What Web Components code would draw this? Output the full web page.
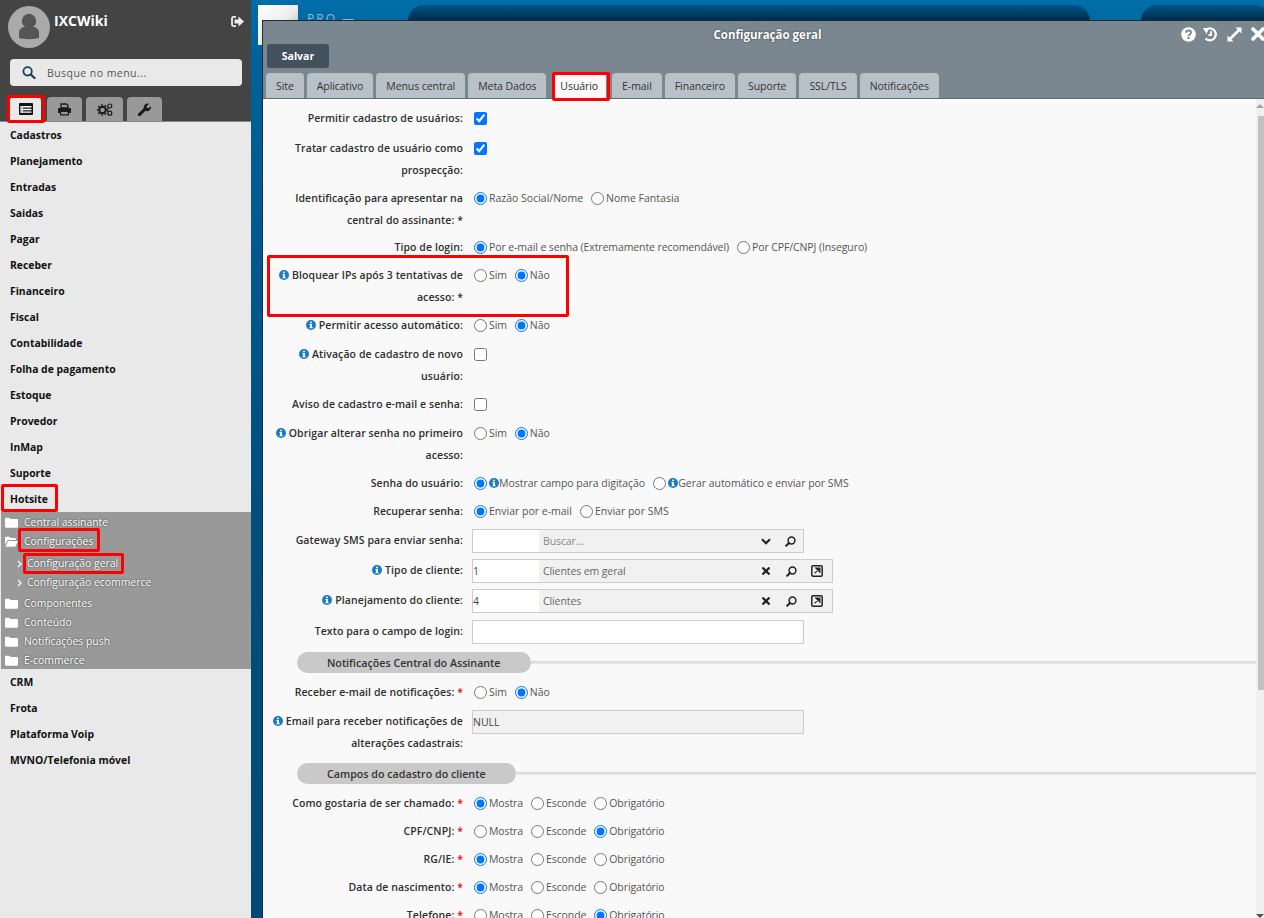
<!DOCTYPE html>
<html lang="pt-BR">
<head>
<meta charset="utf-8">
<title>IXCWiki</title>
<style>
  html, body { margin: 0; height: 100%; overflow: hidden; }
  body { font-family: "Open Sans", "Noto Sans", sans-serif; font-size: 10.5px; color: #333; }
</style>
</head>
<body>
<ixc-app>
  <ixc-sidebar slot="side"></ixc-sidebar>
  <ixc-desktop slot="main">
    <ixc-window title-text="Configuração geral">
      <form-row h="30" label="Permitir cadastro de usuários:"><input type="checkbox" checked></form-row>
      <form-row h="50" label="Tratar cadastro de usuário como prospecção:"><input type="checkbox" checked></form-row>
      <form-row h="49" label="Identificação para apresentar na central do assinante:" req="plain">
        <radio-group style="letter-spacing:0" name="a" options="Razão Social/Nome|Nome Fantasia" checked="0"></radio-group>
      </form-row>
      <form-row h="28" label="Tipo de login:">
        <radio-group name="b" options="Por e-mail e senha (Extremamente recomendável)|Por CPF/CNPJ (Inseguro)" checked="0"></radio-group>
      </form-row>
      <form-row h="50" info label="Bloquear IPs após 3 tentativas de acesso:" req="plain">
        <radio-group name="c" options="Sim|Não" checked="1"></radio-group>
      </form-row>
      <form-row h="29" info label="Permitir acesso automático:">
        <radio-group name="d" options="Sim|Não" checked="1"></radio-group>
      </form-row>
      <form-row h="50" info label="Ativação de cadastro de novo usuário:"><input type="checkbox"></form-row>
      <form-row h="29" label="Aviso de cadastro e-mail e senha:"><input type="checkbox"></form-row>
      <form-row h="50" info label="Obrigar alterar senha no primeiro acesso:">
        <radio-group name="e" options="Sim|Não" checked="1"></radio-group>
      </form-row>
      <form-row h="28" label="Senha do usuário:">
        <radio-group style="letter-spacing:-.03px" name="f" info options="Mostrar campo para digitação|Gerar automático e enviar por SMS" checked="0"></radio-group>
      </form-row>
      <form-row h="29" label="Recuperar senha:">
        <radio-group style="letter-spacing:0" name="g" options="Enviar por e-mail|Enviar por SMS" checked="0"></radio-group>
      </form-row>
      <form-row h="30" label="Gateway SMS para enviar senha:"><lookup-field placeholder="Buscar..." actions="down,search"></lookup-field></form-row>
      <form-row h="30" info label="Tipo de cliente:"><lookup-field code="1" text="Clientes em geral" actions="clear,search,open"></lookup-field></form-row>
      <form-row h="31" info label="Planejamento do cliente:"><lookup-field code="4" text="Clientes" actions="clear,search,open"></lookup-field></form-row>
      <form-row h="32" label="Texto para o campo de login:"><text-box></text-box></form-row>
      <section-title>Notificações Central do Assinante</section-title>
      <form-row h="29" label="Receber e-mail de notificações:" req="red">
        <radio-group name="h" options="Sim|Não" checked="1"></radio-group>
      </form-row>
      <form-row h="53" info label="Email para receber notificações de alterações cadastrais:"><text-box readonly value="NULL"></text-box></form-row>
      <section-title>Campos do cadastro do cliente</section-title>
      <form-row h="28" label="Como gostaria de ser chamado:" req="red"><radio-group name="i" options="Mostra|Esconde|Obrigatório" checked="0"></radio-group></form-row>
      <form-row h="28" label="CPF/CNPJ:" req="red"><radio-group name="j" options="Mostra|Esconde|Obrigatório" checked="2"></radio-group></form-row>
      <form-row h="28" label="RG/IE:" req="red"><radio-group name="k" options="Mostra|Esconde|Obrigatório" checked="0"></radio-group></form-row>
      <form-row h="28" label="Data de nascimento:" req="red"><radio-group name="l" options="Mostra|Esconde|Obrigatório" checked="0"></radio-group></form-row>
      <form-row h="28" label="Telefone:" req="red"><radio-group name="m" options="Mostra|Esconde|Obrigatório" checked="2"></radio-group></form-row>
    </ixc-window>
  </ixc-desktop>
</ixc-app>

<!-- marcações vermelhas por cima da tela -->
<red-box x="7" y="95" w="38" h="28"></red-box>
<red-box x="1" y="484" w="57" h="28"></red-box>
<red-box x="18" y="528" w="82" h="24"></red-box>
<red-box x="23" y="553" w="101" h="21"></red-box>
<red-box x="552" y="72" w="58" h="29"></red-box>
<red-box x="267" y="255" w="302" h="62"></red-box>

<script>
const icons = {
  find: '<svg width="14" height="13" viewBox="0 0 14 13"><circle cx="5.600" cy="5.300" r="4.200" fill="none" stroke="currentColor" stroke-width="1.800"/><path d="M8.800 8.500 12.500 12" stroke="currentColor" stroke-width="2.300" stroke-linecap="round"/></svg>',
  search: '<svg width="11" height="11" viewBox="0 0 11 11"><circle cx="6.500" cy="4.500" r="3.400" fill="none" stroke="currentColor" stroke-width="1.500"/><path d="M4 7 1.200 9.800" stroke="currentColor" stroke-width="2" stroke-linecap="round"/></svg>',
  clear: '<svg width="8" height="8" viewBox="0 0 8 8"><path d="M1.200 1.200 6.800 6.800M6.800 1.200 1.200 6.800" stroke="currentColor" stroke-width="2.300" stroke-linecap="round"/></svg>',
  down: '<svg width="10" height="7" viewBox="0 0 10 7"><path d="M1 1.300 5 5.200 9 1.300" fill="none" stroke="currentColor" stroke-width="2.200"/></svg>',
  open: '<svg width="12" height="12" viewBox="0 0 12 12"><rect x=".8" y=".8" width="10.400" height="10.400" rx="1.200" fill="none" stroke="currentColor" stroke-width="1.500"/><path d="M3.600 8.400 7.600 4.400M5 3.200H8.800V7Z" fill="currentColor" stroke="currentColor" stroke-width="1.300"/></svg>',
  info: '<svg width="10" height="10" viewBox="0 0 10 10"><circle cx="5" cy="5" r="5" fill="#1b7cc4"/><rect x="4.100" y="1.700" width="1.800" height="1.500" fill="#fff"/><path d="M3.400 4.100H5.900V7.300H6.700V8.300H3.400V7.300H4.100V5.100H3.400Z" fill="#fff"/></svg>'
}

/**
 * Frame of the page: sidebar on the left, desktop on the right.
 */
customElements.define('ixc-app', class extends HTMLElement {
  constructor () {
    super()
    this.attachShadow({ mode: 'open' }).innerHTML = `
      <style>
        :host { display: flex; width: 1264px; height: 918px; overflow: hidden; }
        ::slotted([slot=side]) { flex: 0 0 251px; }
        ::slotted([slot=main]) { flex: 1; }
      </style>
      <slot name="side"></slot><slot name="main"></slot>`
  }
})

const sideTemplate = document.createElement('template')
sideTemplate.innerHTML = `
  <style>
    :host { display: flex; flex-direction: column; height: 918px; background: #e9e9e9; color: #111; }
    .top { background: #444; height: 121px; box-sizing: border-box; display: flex; flex-direction: column; }
    .user { display: flex; height: 59px; padding: 6px 0 0 8px; box-sizing: border-box; }
    .avatar { width: 42px; height: 42px; border-radius: 50%; background: #aaa; flex: none; }
    .name { color: #fff; font-weight: 700; font-size: 14px; margin: 5px 0 0 4px; line-height: 19px; }
    .out { margin: 10px 0 0 auto; padding-right: 7px; height: 11px; color: #eee; }
    .search { margin: 0 9px 0 10px; height: 27px; border-radius: 4px; background: #e9e9e9; display: flex; align-items: center; gap: 11px; padding-left: 12px; color: #555; letter-spacing: .45px; }
    .search svg { color: #1d3f58; flex: none; }
    .tabs { display: flex; margin-top: auto; padding-left: 10px; gap: 5px; align-items: flex-end; }
    .tab { height: 24px; background: #999; border-radius: 4px 4px 0 0; display: flex; align-items: center; justify-content: center; color: #1a1a1a; box-sizing: border-box; }
    .tab.on { background: #e9e9e9; height: 24px; width: 31px; margin-right: 1px; }
    .menu { display: flex; flex-direction: column; border-top: 1px solid #888; font-size: 10.4px; }
    .item { height: 26px; line-height: 26px; padding-left: 10px; font-weight: 700; }
    .tree { background: #999; height: 157px; margin-left: 1px; padding-top: 1px; color: #fff; text-shadow: 0 0 2px #333; box-sizing: border-box; }
    .node { height: 19px; line-height: 19px; display: flex; align-items: center; padding-left: 4px; gap: 6px; }
    .leaf { height: 19px; line-height: 19px; display: flex; align-items: center; padding-left: 16px; gap: 5px; }
    .leaf.first { margin-top: 3px; }
    .leaf.last { margin-bottom: 2px; }
    .node svg, .leaf svg { flex: none; }
  </style>
  <div class="top">
    <div class="user">
      <div class="avatar">
        <svg width="42" height="42" viewBox="0 0 42 42"><circle cx="21" cy="15" r="7.200" fill="#555"/><path d="M11 32v-5c0-3.500 2.500-6 6-6h8c3.500 0 6 2.500 6 6v5c-5 1.500-15 1.500-20 0Z" fill="#555"/></svg>
      </div>
      <div class="name">IXCWiki</div>
      <div class="out">
        <svg width="13" height="11" viewBox="0 0 13 11"><path d="M5 .9H2.500C1.500.9 1 1.500 1 2.400v6.200c0 .9.500 1.500 1.500 1.500H5" fill="none" stroke="currentColor" stroke-width="1.800"/><path d="M7.500.5 13 5.500 7.500 10.500V7.500H3.500V3.500H7.500Z" fill="currentColor"/></svg>
      </div>
    </div>
    <div class="search">${icons.find}<span>Busque no menu...</span></div>
    <div class="tabs">
      <div class="tab on">
        <svg width="14" height="12" viewBox="0 0 14 12"><rect width="14" height="12" rx="1" fill="#111"/><path d="M1.500 3h11v1.500h-11zM1.500 5.800h11v1.400h-11zM1.500 8.400h11v1.400h-11z" fill="#fff"/><path d="M1.500 3h2.500v6.800H1.500z" fill="#d8c8f0"/></svg>
      </div>
      <div class="tab" style="width:35px;margin-right:-1px">
        <svg width="13" height="13" viewBox="0 0 13 13"><path d="M3 5V1h5.500L10 2.500V5Z" fill="none" stroke="currentColor" stroke-width="1.300"/><path d="M0 6.200C0 5.500.5 5 1.200 5h10.600c.7 0 1.200.5 1.200 1.200V10h-2v2.500H2V10H0ZM3.200 9v2.300h6.600V9Z" fill="currentColor"/></svg>
      </div>
      <div class="tab" style="width:37px;margin-right:-1px">
        <svg width="16" height="13" viewBox="0 0 16 13"><circle cx="5.500" cy="7" r="3.200" fill="none" stroke="currentColor" stroke-width="2"/><circle cx="5.500" cy="7" r="5" fill="none" stroke="currentColor" stroke-width="1.400" stroke-dasharray="1.800 1.800"/><circle cx="12.800" cy="3" r="2" fill="none" stroke="currentColor" stroke-width="1.200"/><circle cx="12.800" cy="10.200" r="2" fill="none" stroke="currentColor" stroke-width="1.200"/></svg>
      </div>
      <div class="tab" style="width:35px">
        <svg width="13" height="13" viewBox="0 0 13 13"><path d="M1.400 11.600 6.800 6.200" stroke="currentColor" stroke-width="3" stroke-linecap="round"/><path d="M5.600 4.600C5.600 2.400 7.400.6 9.600.6c.5 0 1 .1 1.400.3L8.600 3.200l.4 1.600 1.600.4L12.700 3c.2.400.3.800.3 1.200 0 2.200-1.800 4-4 4-.7 0-1.400-.2-2-.6Z" fill="currentColor"/></svg>
      </div>
    </div>
  </div>
  <div class="menu" id="menu"></div>`

/**
 * The left menu with the open Hotsite tree.
 */
customElements.define('ixc-sidebar', class extends HTMLElement {
  constructor () {
    super()
    this.attachShadow({ mode: 'open' }).appendChild(sideTemplate.content.cloneNode(true))
    const folder = '<svg width="13" height="11" viewBox="0 0 13 11"><path d="M0 2C0 1.200.5.700 1.200.7h3L5.500 2h6.300c.7 0 1.200.5 1.200 1.200v6.300c0 .7-.5 1.200-1.200 1.200H1.200C.5 10.700 0 10.200 0 9.500Z" fill="#fff"/></svg>'
    const openFolder = '<svg width="13" height="11" viewBox="0 0 13 11"><path d="M0 9V2C0 1.200.5.700 1.200.7h3L5.500 2h4.300c.7 0 1.200.5 1.200 1.200V4H3.500C2.800 4 2.400 4.300 2.100 4.800Z" fill="#fff"/><path d="M3 5h10L10.200 10.700H.6Z" fill="#fff"/></svg>'
    const chevron = '<svg width="5" height="8" viewBox="0 0 5 8"><path d="M1 1 4 4 1 7" fill="none" stroke="#fff" stroke-width="1.200"/></svg>'
    const before = ['Cadastros', 'Planejamento', 'Entradas', 'Saidas', 'Pagar', 'Receber', 'Financeiro', 'Fiscal', 'Contabilidade', 'Folha de pagamento', 'Estoque', 'Provedor', 'InMap', 'Suporte', 'Hotsite']
    const after = ['CRM', 'Frota', 'Plataforma Voip', 'MVNO/Telefonia móvel']
    const item = (text) => `<div class="item">${text}</div>`
    const node = (text, icon = folder) => `<div class="node">${icon}<span>${text}</span></div>`
    this.shadowRoot.querySelector('#menu').innerHTML = before.map(item).join('') + `
      <div class="tree">
        ${node('Central assinante')}
        ${node('Configurações', openFolder)}
        <div class="leaf first">${chevron}<span>Configuração geral</span></div>
        <div class="leaf last">${chevron}<span>Configuração ecommerce</span></div>
        ${node('Componentes')}
        ${node('Conteúdo')}
        ${node('Notificações push')}
        ${node('E-commerce')}
      </div>` + after.map(item).join('')
  }
})

/**
 * Blue backdrop behind the window, the top of the page shows through it.
 */
customElements.define('ixc-desktop', class extends HTMLElement {
  constructor () {
    super()
    this.attachShadow({ mode: 'open' }).innerHTML = `
      <style>
        :host { display: block; position: relative; height: 918px; overflow: hidden; background: linear-gradient(#006ea8, #00619a 60px, #004f7f 500px, #004a78); }
        .logo { position: absolute; left: 7px; top: 5px; width: 40px; height: 40px; background: linear-gradient(135deg, #fff, #eee 50%, #aaa); }
        .pro { position: absolute; left: 56px; top: 11px; color: #8db8d6; font-size: 12px; letter-spacing: 2px; line-height: 16px; }
        .bar { position: absolute; top: 5px; height: 40px; border-radius: 16px 16px 0 0; background: linear-gradient(#00558a, #002a48 16px); }
        ::slotted(ixc-window) { position: absolute; left: 11px; top: 20px; width: 1003px; height: 898px; }
      </style>
      <div class="logo"></div><div class="pro">PRO —</div>
      <div class="bar" style="left:157px;width:682px"></div>
      <div class="bar" style="left:890px;width:130px"></div>
      <slot></slot>`
  }
})

const windowTemplate = document.createElement('template')
windowTemplate.innerHTML = `
  <style>
    :host { display: flex; flex-direction: column; box-sizing: border-box; border: 1px solid #1d2a33; border-width: 1px 0 0 1px; background: #f9f9f9; }
    .head { background: #7a8690; height: 78px; flex: none; display: flex; flex-direction: column; position: relative; }
    .title { text-align: center; color: #fff; font-weight: 700; font-size: 11.500px; line-height: 28px; height: 23px; padding-left: 7px; text-shadow: 0 0 2px #333; }
    .tools { position: absolute; right: 0; top: 5px; display: flex; align-items: center; height: 16px; color: #fff; }
    .tools svg { display: block; }
    .save { margin: 0 0 0 4px; width: 62px; height: 24px; border: 0; border-radius: 3px; background: #43515d; color: #fff; font: 700 10.500px "Open Sans", sans-serif; }
    .tabs { display: flex; gap: 3px; margin-top: 5px; padding-left: 3px; height: 25px; border-bottom: 1px solid #5f6c77; letter-spacing: -.07px; }
    .tab { height: 25px; line-height: 26px; padding: 0 10px; background: #b9c1c8; border-radius: 4px 4px 0 0; color: #333; }
    .tab.on { background: #f9f9f9; margin: 0 3px; height: 26px; padding: 0 8px; }
    .body { flex: 1; position: relative; overflow: hidden; padding-top: 8px; padding-right: 9px; }
    .track { position: absolute; right: 0; top: 0; bottom: 0; width: 9px; background: #f0f0f0; }
    .thumb { position: absolute; right: 0; top: 17px; width: 7px; height: 574px; background: #c1c1c1; }
    .up { position: absolute; right: 1px; top: 5px; border: 4px solid transparent; border-bottom-color: #a3a3a3; border-top: 0; }
    .dn { position: absolute; right: 1px; bottom: 0; border: 4px solid transparent; border-top-color: #505050; border-bottom: 0; }
  </style>
  <div class="head">
    <div class="title" id="title"></div>
    <div class="tools">
      <svg style="margin-right:7px" width="15" height="15" viewBox="0 0 15 15"><circle cx="7.500" cy="7.500" r="7.300" fill="#fff"/><path d="M5 5.800c0-1.500 1.100-2.300 2.500-2.300s2.600.8 2.600 2.100c0 1.900-2.600 1.800-2.600 3.700" fill="none" stroke="#7a8690" stroke-width="1.800"/><rect x="6.500" y="10" width="2" height="2" fill="#7a8690"/></svg>
      <svg style="margin-right:9px" width="15" height="15" viewBox="0 0 15 15"><path d="M3 2.700A6 6 0 1 1 2.500 11.500" fill="none" stroke="#fff" stroke-width="2.300"/><path d="M0 1H6L3.500 7Z" fill="#fff"/><path d="M8 4.200V8H5.500" fill="none" stroke="#fff" stroke-width="1.900"/></svg>
      <svg style="margin-right:9px" width="15" height="15" viewBox="0 0 15 15"><path d="M3 12 12 3" stroke="#fff" stroke-width="2.600"/><path d="M8.500.5h6V6.500ZM.5 8.500v6H6.500Z" fill="#fff"/></svg>
      <svg width="14" height="14" viewBox="0 0 14 14"><path d="M2 2 12 12M12 2 2 12" stroke="#fff" stroke-width="3.600" stroke-linecap="round"/></svg>
    </div>
    <button class="save">Salvar</button>
    <div class="tabs" id="tabs"></div>
  </div>
  <div class="body">
    <slot></slot>
    <div class="track"><div class="up"></div><div class="thumb"></div><div class="dn"></div></div>
  </div>`

/**
 * The "Configuração geral" window with its tabs.
 */
customElements.define('ixc-window', class extends HTMLElement {
  constructor () {
    super()
    this.attachShadow({ mode: 'open' }).appendChild(windowTemplate.content.cloneNode(true))
    this.shadowRoot.querySelector('#title').textContent = this.getAttribute('title-text')
    const tabs = ['Site', 'Aplicativo', 'Menus central', 'Meta Dados', 'Usuário', 'E-mail', 'Financeiro', 'Suporte', 'SSL/TLS', 'Notificações']
    this.shadowRoot.querySelector('#tabs').innerHTML = tabs
      .map((tab) => `<div class="tab${tab === 'Usuário' ? ' on' : ''}">${tab}</div>`).join('')
  }
})

/**
 * One line of the form: right aligned label, control in the slot.
 */
customElements.define('form-row', class extends HTMLElement {
  constructor () {
    super()
    const info = this.hasAttribute('info') ? `<span class="i">${icons.info}</span> ` : ''
    const req = this.getAttribute('req')
    const star = req ? ` <span class="${req}">*</span>` : ''
    this.attachShadow({ mode: 'open' }).innerHTML = `
      <style>
        :host { display: grid; grid-template-columns: 192px 1fr; column-gap: 9px; padding-left: 8px; box-sizing: border-box; height: ${this.getAttribute('h')}px; }
        .label { text-align: right; font-weight: 600; line-height: 22px; color: #2f2f2f; letter-spacing: .08px; }
        .i svg { vertical-align: -1px; }
        .red { color: #e00; }
        .control { display: flex; align-items: flex-start; min-height: 22px; }
        ::slotted(input) { margin: 5px 0 0 2px; width: 13px; height: 13px; accent-color: #0075ff; }
      </style>
      <div class="label">${info}${this.getAttribute('label')}${star}</div>
      <div class="control"><slot></slot></div>`
  }
})

/**
 * Group of native radio buttons.
 */
customElements.define('radio-group', class extends HTMLElement {
  constructor () {
    super()
    const name = this.getAttribute('name')
    const checked = Number(this.getAttribute('checked'))
    const info = this.hasAttribute('info') ? icons.info : ''
    const options = this.getAttribute('options').split('|').map((text, i) => `
      <label><input type="radio" name="${name}" ${i === checked ? 'checked' : ''}><span class="t">${info}${text}</span></label>`).join('')
    this.attachShadow({ mode: 'open' }).innerHTML = `
      <style>
        :host { display: flex; gap: 8px; padding: 1px 0 0 2px; line-height: 20px; color: #555; letter-spacing: -.1px; }
        label { display: flex; align-items: center; height: 20px; }
        input { margin: 0 2px 0 0; width: 13px; height: 13px; flex: none; }
        .t svg { vertical-align: -1px; }
      </style>${options}`
  }
})

/**
 * Lookup: code input, description and its action icons.
 */
customElements.define('lookup-field', class extends HTMLElement {
  constructor () {
    super()
    const text = this.getAttribute('text')
    const actions = this.getAttribute('actions').split(',')
    const wide = actions.includes('open')
    const buttons = actions.map((name) => `<span class="a ${name}">${icons[name]}</span>`).join('')
    this.attachShadow({ mode: 'open' }).innerHTML = `
      <style>
        :host { display: flex; width: ${wide ? 361 : 332}px; height: 24px; box-sizing: border-box; border: 1px solid #ccc; background: #f1f1f1; color: #666; line-height: 22px; letter-spacing: -.1px; }
        .code { width: 66px; background: #fff; box-sizing: border-box; flex: none; color: #444; }
        .text { flex: 1; padding-left: 4px; }
        .ph { color: #888; }
        .acts { display: flex; align-items: center; padding-right: ${wide ? 2 : 0}px; color: #222; }
        .a { display: flex; width: 25px; justify-content: center; }
        .a svg { display: block; }
        .a.clear { margin-right: 2px; width: 23px; }
        .a.open { width: 26px; }
      </style>
      <div class="code">${this.getAttribute('code') || ''}</div>
      <div class="text ${text ? '' : 'ph'}">${text || this.getAttribute('placeholder')}</div>
      <div class="acts">${buttons}</div>`
  }
})

/**
 * Plain text box, grey when read only.
 */
customElements.define('text-box', class extends HTMLElement {
  constructor () {
    super()
    this.attachShadow({ mode: 'open' }).innerHTML = `
      <style>
        :host { display: block; width: 332px; height: 24px; box-sizing: border-box; border: 1px solid #ccc; background: #fff; line-height: 22px; color: #444; }
        :host([readonly]) { background: #f1f1f1; }
      </style>${this.getAttribute('value') || ''}`
  }
})

/**
 * Grey pill with a line running to the right edge.
 */
customElements.define('section-title', class extends HTMLElement {
  constructor () {
    super()
    this.attachShadow({ mode: 'open' }).innerHTML = `
      <style>
        :host { display: flex; align-items: center; height: 21px; margin: 0 0 8px 34px; }
        .pill { background: #c9c9c9; border-radius: 11px; height: 21px; line-height: 22px; padding: 0 30px; font-weight: 600; font-size: 10.700px; color: #333; flex: none; }
        .line { flex: 1; height: 3px; background: #e3e3e3; border-top: 1px solid #d6d6d6; box-sizing: border-box; }
      </style>
      <div class="pill"><slot></slot></div><div class="line"></div>`
  }
})

/**
 * Red annotation drawn over the screenshot.
 */
customElements.define('red-box', class extends HTMLElement {
  constructor () {
    super()
    const get = (name) => this.getAttribute(name)
    this.attachShadow({ mode: 'open' }).innerHTML = `
      <style>
        :host { position: absolute; left: ${get('x')}px; top: ${get('y')}px; width: ${get('w')}px; height: ${get('h')}px; box-sizing: border-box; border: 3px solid #f00; border-radius: 2px; }
      </style>`
  }
})
</script>
</body>
</html>
